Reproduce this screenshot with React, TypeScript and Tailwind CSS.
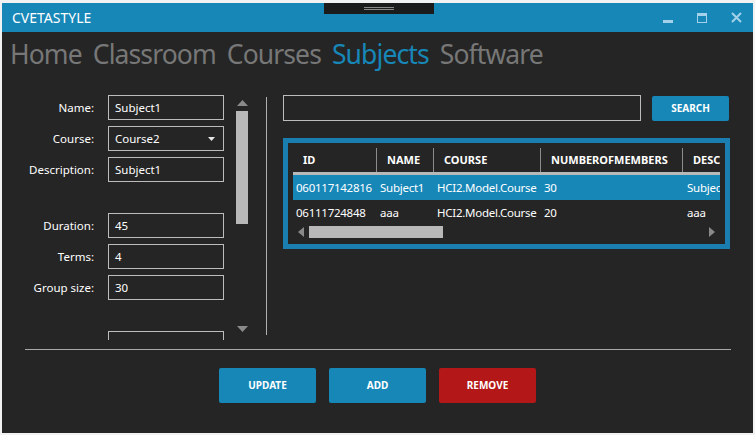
const font = { fontFamily: '"Noto Sans", "Open Sans", sans-serif' }

const fields = [
  { label: 'Name:', value: 'Subject1' },
  { label: 'Course:', value: 'Course2', select: true },
  { label: 'Description:', value: 'Subject1' },
  null,
  { label: 'Duration:', value: '45' },
  { label: 'Terms:', value: '4' },
  { label: 'Group size:', value: '30' },
  null,
  { label: '', value: '' },
]

const cols = ['w-[83px]', 'w-[57px]', 'w-[107px]', 'w-[142px]', 'w-[100px]']
const headerCols = ['ID', 'NAME', 'COURSE', 'NUMBEROFMEMBERS', 'DESC']
const cellPad = ['pl-[3px]', 'pl-[4px]', 'pl-[4px]', 'pl-[4px]', 'pl-[5px]']

const rows = [
  ['060117142816', 'Subject1', 'HCI2.Model.Course', '30', 'Subject1'],
  ['06111724848', 'aaa', 'HCI2.Model.Course', '20', 'aaa'],
]

function TitleBar() {
  return (
    <div className="relative flex h-[29px] shrink-0 items-center bg-[#1787b8] pl-[10px] text-[14px] text-white">
      <span>CVETASTYLE</span>
      {/* drag handle */}
      <div className="absolute left-[322px] top-0 flex h-[11px] w-[110px] flex-col items-center justify-center gap-[1px] bg-[#1b1b1b]">
        <div className="h-px w-[30px] bg-[#8a8a8a]" />
        <div className="h-px w-[30px] bg-[#8a8a8a]" />
      </div>
      <div className="ml-auto flex h-full items-center">
        <div className="flex w-[34px] justify-center">
          <svg width="10" height="10" viewBox="0 0 10 10">
            <rect x="0" y="7" width="10" height="3" fill="#a3d1ea" />
          </svg>
        </div>
        <div className="flex w-[34px] justify-center">
          <svg width="10" height="10" viewBox="0 0 10 10" fill="none">
            <rect x="0.5" y="0.5" width="9" height="9" stroke="#a3d1ea" />
            <rect x="0" y="0" width="10" height="3" fill="#a3d1ea" />
          </svg>
        </div>
        <div className="flex w-[34px] justify-center">
          <svg width="11" height="11" viewBox="0 0 11 11">
            <path d="M1 1L10 10M10 1L1 10" stroke="#a3d1ea" strokeWidth="2" />
          </svg>
        </div>
      </div>
    </div>
  )
}

function Nav() {
  return (
    <div className="flex h-[53px] shrink-0 items-start gap-[11px] pl-[8px] pt-[2px] text-[26.5px] leading-[40px] tracking-[-0.9px] text-[#777777]">
      <span>Home</span>
      <span>Classroom</span>
      <span>Courses</span>
      <span className="text-[#1787b8]">Subjects</span>
      <span>Software</span>
    </div>
  )
}

function Form() {
  return (
    <div className="h-[255px] overflow-hidden pt-[10px]">
      <div className="flex flex-col gap-[6px]">
        {fields.map((f, i) =>
          f === null ? (
            <div key={i} className="h-[19px]" />
          ) : (
            <div key={i} className="flex h-[25px] shrink-0 items-center gap-[14px]">
              <div className="w-[92px] text-right text-[11.5px] text-white">{f.label}</div>
              <div className="flex h-[25px] w-[116px] items-center border border-[#bcbcbc] pl-[6px] pr-[8px] text-[11.5px] text-white">
                <span className="flex-1">{f.value}</span>
                {f.select && (
                  <svg width="7" height="4" viewBox="0 0 7 4">
                    <path d="M0 0h7L3.5 4z" fill="#e6e6e6" />
                  </svg>
                )}
              </div>
            </div>
          )
        )}
      </div>
    </div>
  )
}

function VScroll() {
  return (
    <div className="ml-[12px] mt-[15px] flex h-[232px] w-[12px] flex-col items-center">
      <svg width="11" height="6" viewBox="0 0 11 6">
        <path d="M0 6L5.5 0L11 6z" fill="#8a8a8a" />
      </svg>
      <div className="mt-[5px] h-[113px] w-[12px] bg-[#b8b8b8]" />
      <div className="flex-1" />
      <svg width="11" height="6" viewBox="0 0 11 6">
        <path d="M0 0h11L5.5 6z" fill="#8a8a8a" />
      </svg>
    </div>
  )
}

function Grid() {
  return (
    <div className="mt-[17px] h-[111px] w-[447px] border-[5px] border-[#1a7eb0] bg-[#252525] pl-[5px] pt-[5px]">
      <div className="w-[427px] overflow-hidden">
        <div className="flex h-[24px] w-max">
          {headerCols.map((h, i) => (
            <div
              key={h}
              className={`${cols[i]} flex shrink-0 items-center pl-[10px] text-[11px] font-bold text-white ${i > 0 ? 'border-l border-[#8c8c8c]' : ''}`}
            >
              {h}
            </div>
          ))}
        </div>
        <div className="h-[3px] w-full bg-[#b8b8b8]" />
        {rows.map((r, ri) => (
          <div key={ri} className={`flex h-[25px] w-max items-center ${ri === 0 ? 'bg-[#1787b8]' : ''}`}>
            {r.map((c, ci) => (
              <div key={ci} className={`${cols[ci]} ${cellPad[ci]} shrink-0 overflow-hidden whitespace-nowrap text-[11.5px] tracking-[-0.25px] text-white`}>
                {c}
              </div>
            ))}
          </div>
        ))}
        <div className="mt-[1px] flex h-[12px] items-center">
          <svg width="6" height="10" viewBox="0 0 6 10" className="ml-[5px]">
            <path d="M6 0V10L0 5z" fill="#8a8a8a" />
          </svg>
          <div className="ml-[5px] h-[12px] w-[134px] bg-[#b8b8b8]" />
          <svg width="6" height="10" viewBox="0 0 6 10" className="ml-auto mr-[5px]">
            <path d="M0 0V10L6 5z" fill="#8a8a8a" />
          </svg>
        </div>
      </div>
    </div>
  )
}

export default function App() {
  return (
    <div className="h-[435px] w-[755px] bg-[#f2f2f2] px-[2px] pb-[2px] pt-[3px]" style={font}>
      <div className="flex h-full flex-col bg-[#252525]">
        <TitleBar />
        <Nav />
        <div className="flex h-[264px] shrink-0">
          <Form />
          <VScroll />
          <div className="ml-[18px] mt-[12px] h-[238px] w-px bg-[#b0b0b0]" />
          <div className="pl-[16px] pt-[10px]">
            <div className="flex items-center">
              <div className="h-[26px] w-[358px] border border-[#bcbcbc]" />
              <button className="ml-[11px] h-[25px] w-[77px] rounded-[2px] bg-[#1787b8] text-[10px] font-bold text-white">
                SEARCH
              </button>
            </div>
            <Grid />
          </div>
        </div>
        <div className="ml-[23px] mr-[22px] h-px bg-[#a8a8a8]" />
        <div className="flex justify-center gap-[13px] pt-[18px]">
          <button className="h-[35px] w-[97px] rounded-[2px] bg-[#1787b8] text-[10px] font-bold text-white">UPDATE</button>
          <button className="h-[35px] w-[97px] rounded-[2px] bg-[#1787b8] text-[10px] font-bold text-white">ADD</button>
          <button className="h-[35px] w-[97px] rounded-[2px] bg-[#b31717] text-[10px] font-bold text-white">REMOVE</button>
        </div>
      </div>
    </div>
  )
}
